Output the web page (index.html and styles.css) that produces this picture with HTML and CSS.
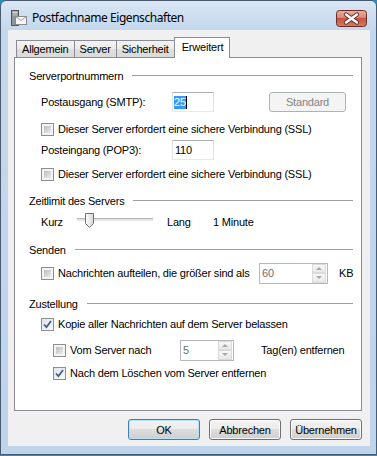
FILE: index.html
```html
<!DOCTYPE html>
<html lang="de">
<head>
<meta charset="utf-8">
<title>Postfachname Eigenschaften</title>
<link rel="stylesheet" href="styles.css">
</head>
<body>
<div class="window">
  <div class="titlebar">
    <svg class="appicon" width="16" height="16" viewBox="0 0 16 16">
      <rect x="0.5" y="0.5" width="7" height="15" fill="#8f959b" stroke="#4f555b"/>
      <rect x="1.5" y="1.5" width="5" height="2" fill="#d0d4d8"/>
      <rect x="1.5" y="4.5" width="5" height="1" fill="#c0c4c8"/>
      <rect x="4.5" y="6.5" width="11" height="8" fill="#f6f6f6" stroke="#868b90"/>
      <path d="M4.5 6.5 L10 10.5 L15.5 6.5" fill="none" stroke="#9a9fa4"/>
    </svg>
    <span class="title">Postfachname Eigenschaften</span>
    <div class="close">
      <svg width="31" height="17" viewBox="0 0 31 17">
        <defs>
          <linearGradient id="cg" x1="0" y1="0" x2="0" y2="1">
            <stop offset="0" stop-color="#eab0a2"/>
            <stop offset="0.45" stop-color="#d98673"/>
            <stop offset="0.5" stop-color="#c8533f"/>
            <stop offset="1" stop-color="#d67b63"/>
          </linearGradient>
        </defs>
        <rect x="0.5" y="0.5" width="30" height="16" rx="3" fill="url(#cg)" stroke="#6a2d29"/>
        <path d="M10 4.5 L21 12.5 M21 4.5 L10 12.5" stroke="#5b2f2c" stroke-width="4.2" stroke-linecap="round"/>
        <path d="M10 4.5 L21 12.5 M21 4.5 L10 12.5" stroke="#ffffff" stroke-width="2.4" stroke-linecap="round"/>
      </svg>
    </div>
  </div>

  <div class="client">
    <div class="tabs">
      <div class="tab">Allgemein</div>
      <div class="tab">Server</div>
      <div class="tab">Sicherheit</div>
      <div class="tab active">Erweitert</div>
    </div>

    <div class="panel">
      <div class="group">Serverportnummern</div>

      <div class="row">
        <span class="label">Postausgang (SMTP):</span>
        <div class="edit"><span class="sel">25</span><span class="caret"></span></div>
        <div class="btn disabled std">Standard</div>
      </div>

      <div class="row">
        <span class="cb"></span><span>Dieser Server erfordert eine sichere Verbindung (SSL)</span>
      </div>

      <div class="row">
        <span class="label">Posteingang (POP3):</span>
        <div class="edit">110</div>
      </div>

      <div class="row">
        <span class="cb"></span><span>Dieser Server erfordert eine sichere Verbindung (SSL)</span>
      </div>

      <div class="group">Zeitlimit des Servers</div>

      <div class="row">
        <span class="slabel">Kurz</span>
        <div class="slider">
          <div class="track"></div>
          <svg class="thumb" width="9" height="15" viewBox="0 0 9 15">
            <defs>
              <linearGradient id="tg" x1="0" y1="0" x2="1" y2="0">
                <stop offset="0" stop-color="#ffffff"/>
                <stop offset="1" stop-color="#d6d6d6"/>
              </linearGradient>
            </defs>
            <path d="M0.5 0.5 H8.5 V10.5 L4.5 14.5 L0.5 10.5 Z" fill="url(#tg)" stroke="#707070"/>
          </svg>
        </div>
        <span class="lang">Lang</span>
        <span>1 Minute</span>
      </div>

      <div class="group">Senden</div>

      <div class="row">
        <span class="cbl wide"><span class="cb"></span><span>Nachrichten aufteilen, die größer sind als</span></span>
        <div class="spin w69">
          <span class="val">60</span>
          <span class="arrows"><span class="up"></span><span class="down"></span></span>
        </div>
        <span class="unit">KB</span>
      </div>

      <div class="group">Zustellung</div>

      <div class="row">
        <span class="cb checked"><svg width="9" height="9" viewBox="0 0 9 9"><path d="M1 4.5 L3.5 7.2 L8 1" fill="none" stroke="#3f5a8f" stroke-width="1.8"/></svg></span><span>Kopie aller Nachrichten auf dem Server belassen</span>
      </div>

      <div class="row sub">
        <span class="cbl narrow"><span class="cb"></span><span>Vom Server nach</span></span>
        <div class="spin w54">
          <span class="val">5</span>
          <span class="arrows"><span class="up"></span><span class="down"></span></span>
        </div>
        <span class="days">Tag(en) entfernen</span>
      </div>

      <div class="row sub">
        <span class="cb checked"><svg width="9" height="9" viewBox="0 0 9 9"><path d="M1 4.5 L3.5 7.2 L8 1" fill="none" stroke="#3f5a8f" stroke-width="1.8"/></svg></span><span>Nach dem Löschen vom Server entfernen</span>
      </div>
    </div>

    <div class="buttons">
      <div class="btn default">OK</div>
      <div class="btn">Abbrechen</div>
      <div class="btn">Übernehmen</div>
    </div>
  </div>
</div>
</body>
</html>
```

FILE: styles.css
```css
html, body {
  margin: 0;
  padding: 0;
}

body {
  width: 377px;
  height: 456px;
  overflow: hidden;
  background: #2a8fb3;
  font-family: "Liberation Sans", Arial, sans-serif;
  font-size: 11px;
  letter-spacing: -0.2px;
  color: #000;
}

.window {
  box-sizing: border-box;
  width: 377px;
  height: 455px;
  border: 1px solid #4a5b6f;
  border-radius: 6px 6px 0 0;
  background: linear-gradient(#d9e6f4 0px, #c4d8ed 28px, #bed4eb 100%);
  display: flex;
  flex-direction: column;
  padding: 0 6px 8px 7px;
}

.titlebar {
  box-sizing: border-box;
  height: 29px;
  padding-top: 9px;
  display: flex;
  align-items: flex-start;
}

.appicon {
  margin-left: 3px;
  flex: none;
}

.title {
  margin-left: 5px;
  font-family: "Noto Sans", "Open Sans", sans-serif;
  font-size: 12px;
  letter-spacing: -0.45px;
  line-height: 16px;
  color: #000;
}

.close {
  margin-left: auto;
  margin-right: 3px;
  width: 31px;
  height: 17px;
}

.close svg {
  display: block;
}

.client {
  flex: 1;
  background: #f0f0f0;
  padding: 7px 8px 0 6px;
}

.tabs {
  display: flex;
  align-items: flex-end;
  height: 20px;
  margin-left: 2px;
}

.tab {
  box-sizing: border-box;
  height: 17px;
  line-height: 16px;
  padding: 0 5px;
  border: 1px solid #898c95;
  border-bottom: none;
  margin-right: -1px;
  background: linear-gradient(#f3f3f3, #ebebeb 50%, #dedede 50%, #dbdbdb);
  white-space: nowrap;
}

.tab.active {
  position: relative;
  z-index: 1;
  height: 21px;
  margin-bottom: -1px;
  line-height: 18px;
  padding: 0 6px 0 7px;
  background: #fff;
}

.panel {
  box-sizing: border-box;
  width: 348px;
  height: 354px;
  border: 1px solid #898c95;
  background: #fff;
  padding: 8px 14px 0 14px;
  display: grid;
  grid-template-rows: 26px 27px 21px 24px 27px 21px 28px 23px 31px 20px 26px 23px 20px;
}

.group {
  display: flex;
  align-items: center;
  height: 20px;
  white-space: nowrap;
}

.group::after {
  content: "";
  flex: 1;
  height: 1px;
  margin-left: 9px;
  margin-top: -1px;
  background: #a0a0a0;
}

.row {
  display: flex;
  align-items: center;
  height: 20px;
  padding-left: 12px;
  white-space: nowrap;
}

.row.sub {
  padding-left: 24px;
}

.label {
  width: 131px;
  flex: none;
}

.edit {
  box-sizing: border-box;
  width: 42px;
  height: 20px;
  border: 1px solid #dbdfe6;
  border-top-color: #abadb3;
  border-left-color: #e2e3ea;
  border-right-color: #dbdfe6;
  border-bottom-color: #e3e9ef;
  background: #fff;
  display: flex;
  align-items: center;
  padding-left: 2px;
}

.sel {
  background: #3399ff;
  color: #fff;
  line-height: 13px;
  margin-left: -1px;
}

.caret {
  width: 1px;
  height: 13px;
  background: #000;
}

.btn {
  box-sizing: border-box;
  width: 72px;
  height: 21px;
  border: 1px solid #707070;
  border-radius: 3px;
  background: linear-gradient(#f2f2f2, #ebebeb 50%, #dddddd 50%, #cfcfcf);
  box-shadow: inset 0 0 0 1px rgba(255, 255, 255, 0.8);
  display: flex;
  align-items: center;
  justify-content: center;
}

.btn.default {
  border-color: #3c7fb1;
  box-shadow: inset 0 0 0 1px #b9e2f8;
}

.btn.disabled {
  border-color: #adb2b5;
  background: #f4f4f4;
  box-shadow: none;
  color: #838383;
}

.btn.std {
  width: 77px;
  height: 20px;
  margin-left: 55px;
}

.cb {
  box-sizing: border-box;
  flex: none;
  width: 13px;
  height: 13px;
  border: 1px solid #8e8f8f;
  padding: 2px;
  background: linear-gradient(135deg, #b9bdc2, #ebeced) content-box, #f4f4f4;
  margin-right: 4px;
  display: flex;
  align-items: center;
  justify-content: center;
}

.cb.checked {
  padding: 0;
  background: linear-gradient(135deg, #dfe3e8, #fafafa);
}

.cb svg {
  display: block;
}

.cbl {
  display: flex;
  align-items: center;
  flex: none;
}

.cbl.wide {
  width: 218px;
}

.cbl.narrow {
  width: 127px;
}

.slabel {
  width: 36px;
  flex: none;
}

.slider {
  position: relative;
  width: 76px;
  height: 20px;
  flex: none;
}

.track {
  position: absolute;
  left: 0;
  right: 0;
  top: 6px;
  height: 2px;
  border-top: 1px solid #b3b3b3;
  border-bottom: 1px solid #ffffff;
  background: #e3e6e8;
}

.thumb {
  position: absolute;
  left: 8px;
  top: 1px;
}

.lang {
  width: 46px;
  margin-left: 14px;
  flex: none;
}

.spin {
  box-sizing: border-box;
  height: 21px;
  border: 1px solid #b4b8bc;
  background: #fff;
  display: flex;
  align-items: center;
  padding-left: 2px;
  color: #6d6d6d;
  flex: none;
}

.spin.w69 {
  width: 69px;
}

.spin.w54 {
  width: 54px;
}

.spin .val {
  flex: 1;
}

.arrows {
  display: flex;
  flex-direction: column;
  width: 14px;
  height: 19px;
  margin-right: 1px;
}

.up, .down {
  box-sizing: border-box;
  flex: 1;
  border: 1px solid #dadada;
  background: linear-gradient(#f7f7f7, #e8e8e8);
  display: flex;
  align-items: center;
  justify-content: center;
}

.up::before {
  content: "";
  border-left: 3px solid transparent;
  border-right: 3px solid transparent;
  border-bottom: 3px solid #a8a8a8;
}

.down::before {
  content: "";
  border-left: 3px solid transparent;
  border-right: 3px solid transparent;
  border-top: 3px solid #a8a8a8;
}

.unit {
  margin-left: 11px;
}

.days {
  margin-left: 27px;
}

.buttons {
  display: flex;
  justify-content: flex-end;
  gap: 9px;
  margin-top: 8px;
}
```
